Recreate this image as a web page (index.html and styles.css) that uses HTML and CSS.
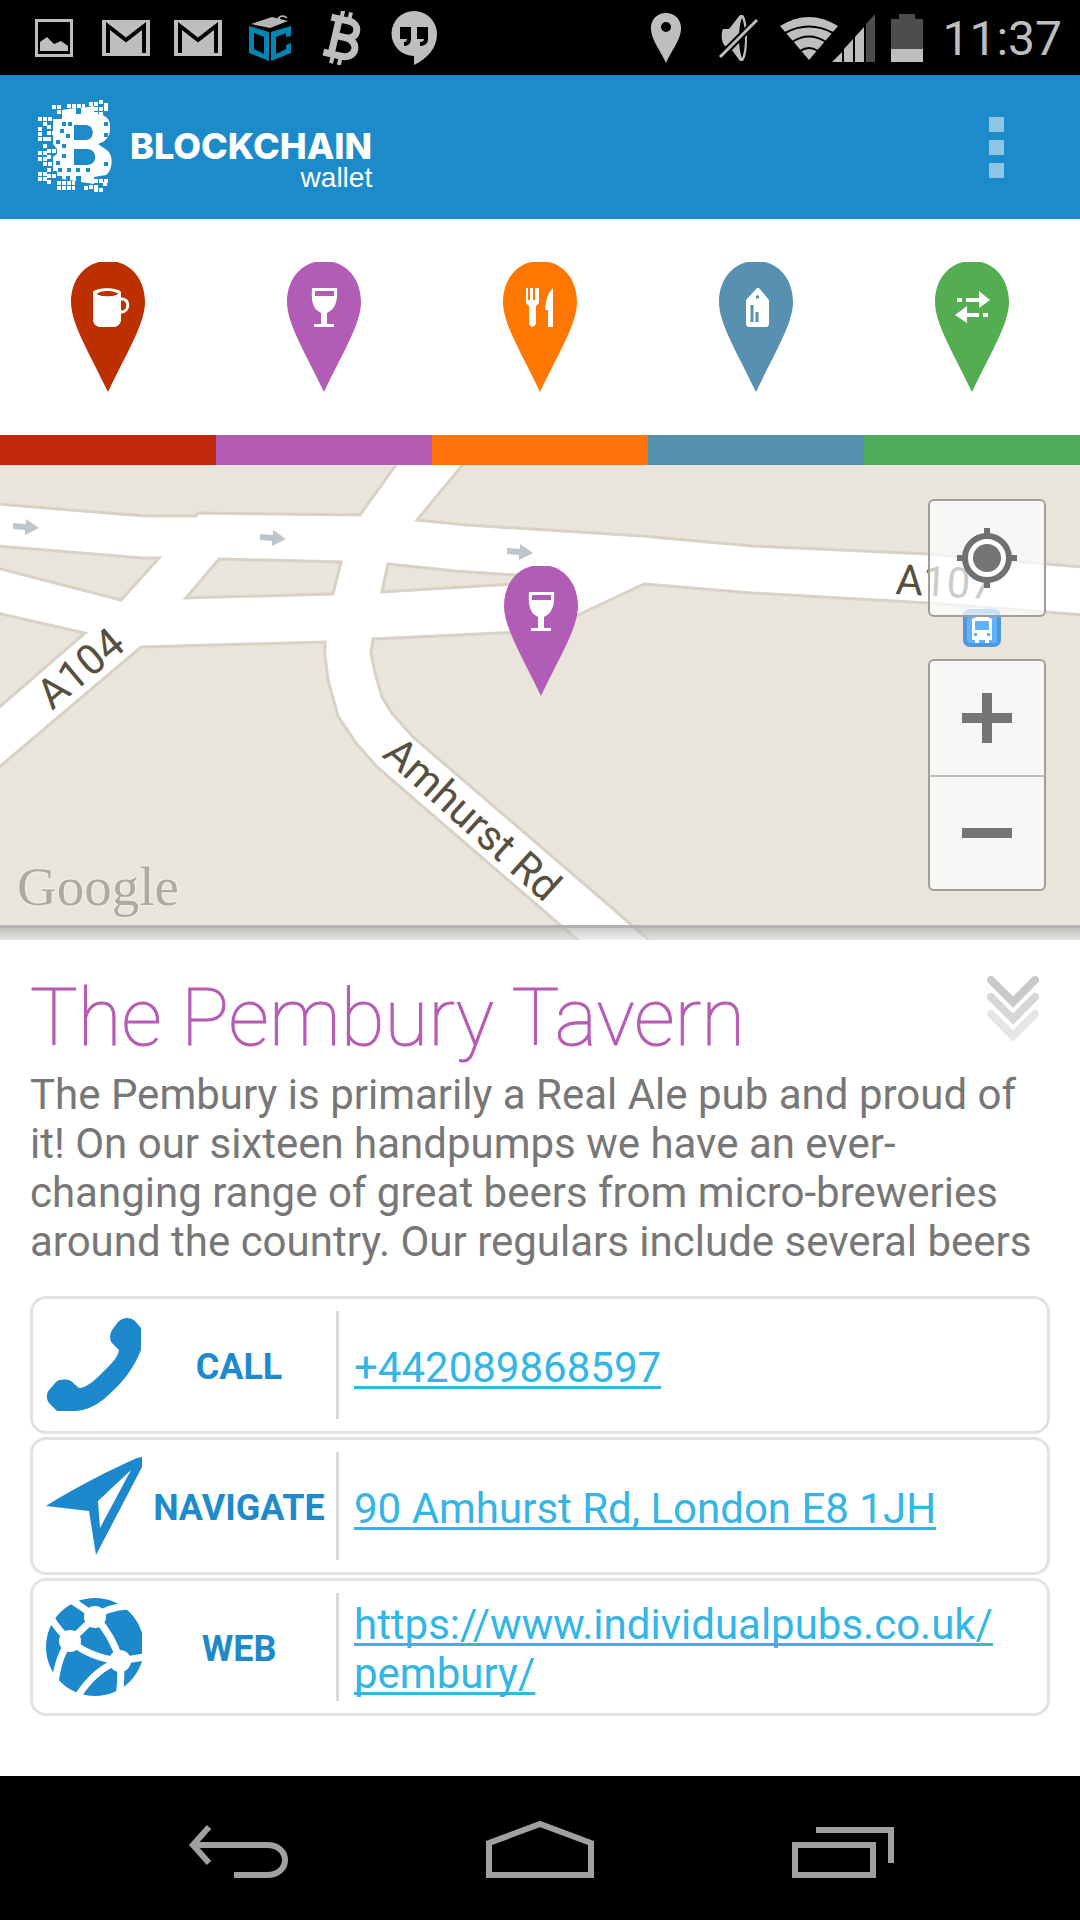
FILE: index.html
```html
<!DOCTYPE html>
<html lang="en">
<head>
    <meta charset="UTF-8">
    <meta name="viewport" content="width=device-width, initial-scale=1.0">
    <link rel="stylesheet" href="styles.css">
    <title>Blockchain Wallet - Merchant Map</title>
</head>
<body>
    <!-- shared shapes -->
    <svg class="defs" width="0" height="0">
        <symbol id="pin" viewBox="0 0 74 130"><path d="M28 0H46C63 4 74 20 74 40C74 62 55 92 37 130C19 92 0 62 0 40C0 20 11 4 28 0z"/></symbol>
        <symbol id="glass" viewBox="0 0 74 130">
            <path fill="#fff" fill-rule="evenodd" d="M25 26H50C51 40 48 47 40 51V62H47V65H27V62H34V51C26 47 24 40 25 26zM28 29V34H47V29z"/>
        </symbol>
        <symbol id="gmail" viewBox="0 0 48 36">
            <path fill="#bebebe" d="M0 0H48V36H0z"/>
            <path fill="none" stroke="#000" stroke-width="4" d="M6 33V6L24 20L42 6V33"/>
        </symbol>
        <symbol id="arrow" viewBox="0 0 26 16"><path fill="#bdc6cd" d="M0 4L13 5V0L26 9L12 16V11L0 10z"/></symbol>
    </svg>

    <div class="status-bar">
        <div class="status-icons">
            <span class="slot"><svg width="38" height="38" viewBox="0 0 38 38"><path fill="none" stroke="#bebebe" stroke-width="3" d="M1.500 1.500H36.500V36.500H1.500z"/><path fill="#bebebe" d="M5 32V23L12 18L19 25L26 22L33 27V32z"/></svg></span>
            <span class="slot"><svg width="48" height="36"><use href="#gmail"/></svg></span>
            <span class="slot"><svg width="48" height="36"><use href="#gmail"/></svg></span>
            <span class="slot"><svg width="42" height="46" viewBox="0 0 42 46">
                <path fill="#b5b5b5" d="M2 9L23 2L39 6L21 13z"/>
                <path fill="none" stroke="#bebebe" stroke-width="1.500" d="M28 6Q32 3 29 3M29 3Q34 -1 38 3"/>
                <path fill="#0086b3" fill-rule="evenodd" d="M0 11L20 17V46L0 38zM5 18V34L15 39V22zM42 11V21L37 22V18L27 22V39L37 34V30L42 28V38L22 46V17z"/>
            </svg></span>
            <span class="slot"><svg width="42" height="54" viewBox="0 0 42 54">
                <g fill="none" stroke="#bebebe" transform="rotate(13 21 27)">
                    <path stroke-width="7" d="M14 9V45M6 9H24C37 9 37 26 24 26H14M24 26C40 26 40 45 24 45H6"/>
                    <path stroke-width="4" d="M16 0V10M24 0V10M16 44V54M24 44V54"/>
                </g>
            </svg></span>
            <span class="slot"><svg width="46" height="54" viewBox="0 0 46 54">
                <path fill="#bebebe" d="M23 0A23 23 0 0 1 46 23C46 37 36 48 23 54V45A22 22 0 0 1 23 0z"/>
                <path d="M9 16H20V28Q20 35 13 35V31Q16 31 16 28H9zM26 16H37V28Q37 35 29 35V31Q33 31 33 28H26z"/>
            </svg></span>
        </div>
        <div class="status-icons">
            <span class="slot"><svg width="32" height="50" viewBox="0 0 32 50"><path fill="#bebebe" fill-rule="evenodd" d="M16 0C25 0 32 7 31 17C30 28 20 40 16 50C12 40 2 28 1 17C0 7 7 0 16 0zM16 9A5 5 0 0 0 16 19A5 5 0 0 0 16 9z"/></svg></span>
            <span class="slot"><svg width="40" height="46" viewBox="0 0 40 46">
                <path fill="#bebebe" fill-rule="evenodd" d="M22 0H25C28 3 29 14 29 23C29 34 28 42 25 46H22L14 35L7 31C3 27 3 18 5 14L11 14zM24 3C20 12 20 34 24 43C28 34 28 12 24 3z"/>
                <path stroke="#000" stroke-width="7" d="M2 42L39 5"/>
                <path stroke="#bebebe" stroke-width="3" d="M2 42L39 5"/>
            </svg></span>
            <svg class="signal" width="95" height="48" viewBox="0 0 95 48">
                <path fill="#bebebe" d="M0 12Q29 -6 58 12L29 46z"/>
                <path fill="none" stroke="#000" stroke-width="2" d="M5 19Q29 6 53 19M12 28Q29 17 46 28M20 37Q29 31 38 37"/>
                <path fill="#bebebe" d="M52 48L62 38V48zM64 48V35L73 25V48zM75 48V23L84 13V48z"/>
                <path fill="#4d4d4d" d="M86 48V10L95 0V48z"/>
            </svg>
            <svg class="battery" width="32" height="48" viewBox="0 0 32 48"><path fill="#4d4d4d" d="M0 5H8V0H24V5H32V48H0z"/><path fill="#bebebe" d="M0 35H32V48H0z"/></svg>
            <span class="clock">11:37</span>
        </div>
    </div>

    <header class="action-bar">
        <div class="brand">
            <svg class="brand__mark" width="76" height="94" viewBox="-2 1 76 94">
                <path fill="#fff" fill-rule="evenodd" d="M24 11L38 9V15H43V9L56 7V15C68 15 73 20 72 30C72 38 67 43 60 45L70 52C76 58 74 72 68 76L56 78V85L43 83V77H38V82L24 80V77H19V72H15V58L19 55V50L15 45V20H24zM36 26V41H48C57 41 57 26 48 26zM36 50V66H49C60 66 60 50 49 50z"/>
                <!-- loose pixels -->
                <g stroke="#fff" stroke-width="4" stroke-dasharray="4 1">
                    <path d="M61 3H65M51 5H60M56 10H70M66 6H70M56 15H65M29 7H47M14 8H24M19 13H28M0 20H14M5 25H9M0 30H4M9 28H14M0 35H4M9 34H19M9 40H14M0 40H9M5 47H9M9 52H19M0 54H9M9 58H14M0 60H9M5 65H14M9 71H14M0 75H9M0 80H9M9 77H19M9 83H14M19 84H37M19 89H37M46 89H50M51 88H60M56 82H70M56 91H65M65 85H70"/>
                </g>
                <g stroke="#1d8bca" stroke-width="4" stroke-dasharray="4 2">
                    <path d="M24 25H34M22 32H26M28 37H32M18 43H22M24 47H28M24 57H28M18 64H22M20 71H24M29 71H33M38 71H42M48 71H52M28 79H32M66 25H70M66 36H70M66 65H70"/>
                </g>
            </svg>
            <div class="brand__text">
                <span class="brand__name">BLOCKCHAIN</span>
                <span class="brand__sub">wallet</span>
            </div>
        </div>
        <button class="overflow-button" aria-label="More options"><i></i><i></i><i></i></button>
    </header>

    <nav class="categories">
        <button class="category category--cafe" aria-label="Cafes">
            <svg width="74" height="130" viewBox="0 0 74 130">
                <use href="#pin" fill="#bc3000"/>
                <path fill="#fff" fill-rule="evenodd" d="M22 30C26 25 46 25 50 30V59Q48 65 42 65H30Q24 65 22 59zM26 32C29 35 44 35 47 32C44 28 29 28 26 32z"/>
                <path fill="none" stroke="#fff" stroke-width="3" d="M50 37C59 36 59 50 50 50"/>
            </svg>
        </button>
        <button class="category category--bar" aria-label="Bars">
            <svg width="74" height="130" viewBox="0 0 74 130"><use href="#pin" fill="#b15cb5"/><use href="#glass"/></svg>
        </button>
        <button class="category category--food" aria-label="Restaurants">
            <svg width="74" height="130" viewBox="0 0 74 130">
                <use href="#pin" fill="#fe7700"/>
                <path fill="#fff" d="M23 26H25V38H27V26H30V38H32V26H36V41L33 44V62Q29 68 26 62V44L23 41zM50 26V65H45V48H42Q43 32 50 26z"/>
            </svg>
        </button>
        <button class="category category--shop" aria-label="Shops">
            <svg width="74" height="130" viewBox="0 0 74 130">
                <use href="#pin" fill="#5790b1"/>
                <path fill="#fff" d="M38 26H40L50 38V63L48 65H29L27 63V38z"/>
                <path stroke="#5790b1" stroke-width="3" d="M37 35H40M33 43V60M38 50V60"/>
            </svg>
        </button>
        <button class="category category--atm" aria-label="Exchanges">
            <svg width="74" height="130" viewBox="0 0 74 130">
                <use href="#pin" fill="#54ad50"/>
                <path fill="#fff" d="M22 36H27V40H22zM31 36H44V29L55 38L44 46V40H31zM53 51H48V55H53zM44 51H32V44L20 53L32 61V55H44z"/>
            </svg>
        </button>
    </nav>

    <section class="map">
        <svg class="map__tiles" viewBox="0 0 1080 475" preserveAspectRatio="xMidYMid slice">
            <rect width="1080" height="475" fill="#fff"/>
            <g fill="#e9e5dd" stroke="#d7d1c6" stroke-width="3">
                <path d="M-3 39L145 51H196L198 48L360 50L398 -3H-3z"/>
                <path d="M465 -3L417 55L467 60L642 71L752 81L929 89L1046 99L1083 102V-3z"/>
                <path d="M-3 81L142 93H159L121 135L-3 103z"/>
                <path d="M219 94L341 97L333 129L186 133z"/>
                <path d="M388 99L455 106L545 112V117L382 127z"/>
                <path d="M-3 148L85 168L-3 244z"/>
                <path d="M-3 304L141 182L325 177V190L328 215L338 251L356 278L377 302L559 459L582 478H-3z"/>
                <path d="M644 119L752 128L929 138L1046 147L1083 150V478H652L611 442L413 272L392 248L382 232L375 208L371 188L373 174L540 166L576 151z"/>
            </g>
            <use href="#arrow" x="13" y="54" width="26" height="16"/>
            <use href="#arrow" x="260" y="65" width="26" height="16"/>
            <use href="#arrow" x="507" y="79" width="26" height="16"/>
            <text class="map__label" transform="translate(52 246) rotate(-40)">A104</text>
            <text class="map__label" transform="translate(381 291) rotate(42)">Amhurst Rd</text>
            <text class="map__label" transform="translate(895 129) rotate(3)">A107</text>
            <rect x="965" y="146" width="34" height="34" rx="5" fill="#63b0fb" stroke="#4f97dc" stroke-width="4"/>
            <path fill="#fff" fill-rule="evenodd" d="M972 154Q982 148 992 154V175H989V178H985V175H979V178H975V175H972zM975 156V165H989V156zM974 168V171H977V168zM987 168V171H990V168z"/>
            <text class="map__logo" x="17" y="440">Google</text>
            <svg x="504" y="101" width="74" height="130" viewBox="0 0 74 130"><use href="#pin" fill="#b15cb5"/><use href="#glass"/></svg>
        </svg>
        <div class="map__controls">
            <button class="map__button" aria-label="My location">
                <svg width="60" height="60" viewBox="0 0 60 60">
                    <circle cx="30" cy="30" r="22" fill="#fff" stroke="#707070" stroke-width="6"/>
                    <circle cx="30" cy="30" r="14" fill="#757575"/>
                    <path stroke="#707070" stroke-width="6" d="M30 0V8M30 52V60M0 30H8M52 30H60"/>
                </svg>
            </button>
            <div class="map__zoom">
                <button class="map__button" aria-label="Zoom in"><svg width="50" height="50"><path fill="#757575" d="M20 0H30V20H50V30H30V50H20V30H0V20H20z"/></svg></button>
                <button class="map__button" aria-label="Zoom out"><svg width="50" height="50"><path fill="#757575" d="M0 20H50V30H0z"/></svg></button>
            </div>
        </div>
    </section>

    <main class="details">
        <div class="details__head">
            <h1 class="details__title">The Pembury Tavern</h1>
            <button class="collapse-button" aria-label="Collapse">
                <svg width="52" height="65" viewBox="0 0 52 65" fill="none" stroke-width="8" stroke-linecap="round">
                    <path stroke="#e6e6e6" d="M4 38L26 60L48 38"/>
                    <path stroke="#d7d7d7" d="M4 21L26 43L48 21"/>
                    <path stroke="#c9c9c9" d="M4 4L26 26L48 4"/>
                </svg>
            </button>
        </div>
        <p class="details__text">The Pembury is primarily a Real Ale pub and proud of it! On our sixteen handpumps we have an ever-changing range of great beers from micro-breweries around the country. Our regulars include several beers</p>

        <div class="contacts">
            <div class="contact">
                <svg class="contact__icon" width="96" height="98" viewBox="0 0 96 98"><path fill="#1e88cd" d="M72 6C77 1 84 1 89 5L95 12V34C88 52 76 68 58 83C48 91 38 95 28 95H11L4 88C0 84 0 78 3 74L10 66C14 63 20 63 25 65L33 72C40 72 48 65 56 57C64 49 72 42 73 34L66 27C63 23 64 18 66 14z"/></svg>
                <span class="contact__label">CALL</span>
                <div class="contact__value"><a href="tel:+442089868597">+442089868597</a></div>
            </div>
            <div class="contact">
                <svg class="contact__icon" width="96" height="98" viewBox="0 0 96 98"><path fill="#1e88cd" fill-rule="evenodd" d="M0 49C30 30 60 15 91 1L96 0V10L50 98L43 54zM85 13L52 44L54 71z"/></svg>
                <span class="contact__label">NAVIGATE</span>
                <div class="contact__value"><a href="#">90 Amhurst Rd, London E8 1JH</a></div>
            </div>
            <div class="contact">
                <svg class="contact__icon" width="96" height="98" viewBox="0 0 96 98">
                    <circle cx="49" cy="49" r="49" fill="#1e88cd"/>
                    <path fill="none" stroke="#fff" stroke-width="7" d="M25 2Q38 10 49 19L24 43Q12 32 5 20M49 19Q62 9 82 8M49 19Q67 38 74 63Q45 60 24 43Q12 58 9 86M74 63L98 59M74 63Q50 70 32 98M74 63Q76 80 73 98"/>
                    <g fill="#fff"><circle cx="49" cy="19" r="11"/><circle cx="24" cy="43" r="11"/><circle cx="74" cy="63" r="11"/></g>
                </svg>
                <span class="contact__label">WEB</span>
                <div class="contact__value"><a href="#">https://www.individualpubs.co.uk/<wbr>pembury/</a></div>
            </div>
        </div>
    </main>

    <footer class="nav-bar">
        <button class="nav-button" aria-label="Back"><svg width="108" height="60" viewBox="0 0 108 60"><path fill="none" stroke="#a0a0a0" stroke-width="6" d="M24 7L8 25L24 43M8 25H82C106 25 106 55 82 55H49"/></svg></button>
        <button class="nav-button" aria-label="Home"><svg width="108" height="60" viewBox="0 0 108 60"><path fill="none" stroke="#a0a0a0" stroke-width="6" d="M3 23L54 4L105 23V55H3z"/></svg></button>
        <button class="nav-button" aria-label="Recent apps"><svg width="108" height="60" viewBox="0 0 108 60"><path fill="none" stroke="#a0a0a0" stroke-width="6" d="M8 25H86V55H8zM29 10H104V43"/></svg></button>
    </footer>
</body>
</html>
```
FILE: styles.css
```css
*{box-sizing: border-box;}

body{margin: 0; min-height: 100vh; display: flex; flex-direction: column; background: #fff; font-family: Roboto, sans-serif;}
button{padding: 0; border: 0; background: none; cursor: pointer;}
svg{display: block; flex: none;}
.defs{position: absolute;}

/* Status bar */
.status-bar{height: 75px; padding: 0 18px; display: flex; justify-content: space-between; align-items: center; background: #000;}
.status-icons{display: flex; align-items: center;}
.slot{width: 72px; display: flex; justify-content: center;}
.signal{margin-left: 6px;}
.battery{margin: 0 19px 0 16px;}
.clock{padding-top: 2px; font-size: 48px; line-height: 73px; color: #bebebe;}

/* Action bar */
.action-bar{height: 144px; padding: 0 36px; display: flex; justify-content: space-between; align-items: center; background: #1d8bca;}
.brand{display: flex; align-items: center; gap: 18px;}
.brand__text{padding-top: 26px; display: flex; flex-direction: column; align-items: flex-end; color: #fff;}
.brand__name{font: 800 36px/36px Inter, sans-serif;}
.brand__sub{font: 28px/28px "Liberation Sans", sans-serif;}
.overflow-button{width: 95px; height: 96px; display: flex; flex-direction: column; justify-content: center; align-items: center; gap: 8px;}
.overflow-button i{width: 15px; height: 15px; background: #8ec5e5;}

/* Category tabs */
.categories{display: flex;}
.category{flex: 1; height: 246px; padding-top: 43px; display: flex; justify-content: center; align-items: flex-start; border-bottom: 30px solid;}
.category--cafe{border-color: #c0280d;}
.category--bar{border-color: #b35bb1;}
.category--food{border-color: #ff730a;}
.category--shop{border-color: #5590ad;}
.category--atm{border-color: #4eab5c;}

/* Map */
.map{height: 475px; position: relative; background: #e9e5dd;}
.map::after{content: ""; position: absolute; left: 0; right: 0; bottom: 0; height: 12px; border-top: 3px solid #b3b2b3; background: linear-gradient(rgba(170, 170, 170, .6), rgba(225, 225, 225, .5));}
.map__tiles{width: 100%; height: 100%;}
.map__label{font-size: 42px; fill: #575040;}
.map__logo{font: 55px "Liberation Serif", serif; fill: #adaaa3; stroke: #f3f0ea; stroke-width: 2px; paint-order: stroke;}
.map__controls{position: absolute; top: 34px; right: 34px; display: flex; flex-direction: column; gap: 42px;}
.map__button{width: 118px; height: 118px; display: flex; justify-content: center; align-items: center; border: 2px solid #a09e99; border-radius: 6px; background: rgba(255, 255, 255, .7);}
.map__zoom .map__button{height: 116px;}
.map__zoom .map__button:first-child{border-bottom: 0; border-radius: 6px 6px 0 0;}
.map__zoom .map__button:last-child{border-top-color: #bfbdb9; border-radius: 0 0 6px 6px;}

/* Merchant details */
.details{flex: 1; padding: 30px 30px 60px;}
.details__head{display: flex; justify-content: space-between; align-items: flex-start;}
.details__title{margin: 0; font-size: 80px; font-weight: 100; line-height: 96px; color: #b65cb3; -webkit-text-stroke: 1px;}
.collapse-button{padding: 6px 11px 0;}
.details__text{margin: 4px 0 30px; font-size: 42px; line-height: 49px; color: #777;}

.contacts{display: flex; flex-direction: column; gap: 3px;}
.contact{min-height: 138px; padding: 12px 13px; display: flex; align-items: center; border: 3px solid #e2e2e2; border-radius: 16px;}
.contact__label{width: 194px; padding-top: 4px; text-align: center; font-size: 36px; font-weight: 700; color: #1e8aca;}
.contact__value{flex: 1; min-height: 108px; padding: 4px 0 0 15px; display: flex; align-items: center; border-left: 3px solid #dadada; font-size: 42px; line-height: 49px;}
.contact__value a{color: #33b5e5; text-decoration-thickness: 3px; text-underline-offset: 4px; text-decoration-skip-ink: none;}

/* System buttons */
.nav-bar{height: 144px; padding: 4px 88px 0; display: flex; align-items: center; background: #000;}
.nav-button{flex: 1; display: flex; justify-content: center;}
```
